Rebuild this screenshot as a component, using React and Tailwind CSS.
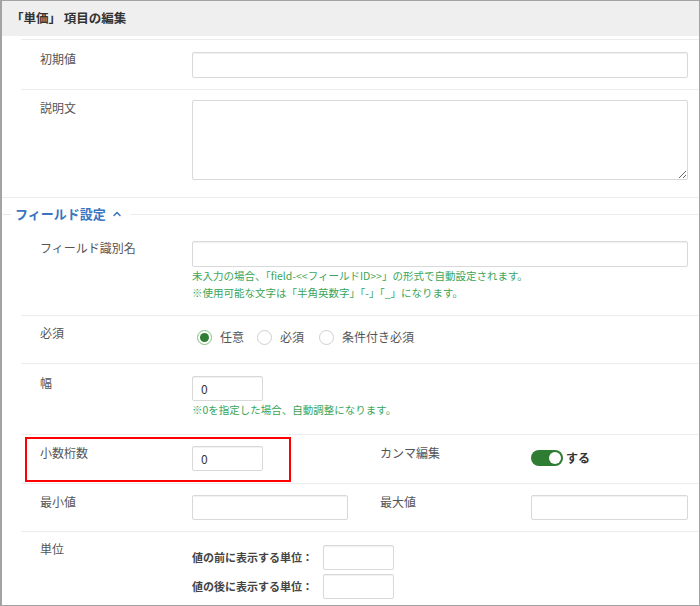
import React from 'react';
import { ChevronUp } from 'lucide-react';

const font = { fontFamily: '"Noto Sans CJK JP", "Noto Sans", sans-serif' };

function TextInput({ className = '', value = '' }) {
  return (
    <div className={`h-[25px] border border-[#d9d9d9] rounded-[2px] bg-white shadow-[inset_0_1px_1px_rgba(0,0,0,0.06)] flex items-center px-[8px] text-[12px] text-[#333] ${className}`}>
      {value}
    </div>
  );
}

function Label({ children, className = '' }) {
  return <div className={`text-[12px] leading-[14px] text-[#555] shrink-0 ${className}`}>{children}</div>;
}

function Hint({ children }) {
  return <div className="text-[10.5px] leading-[17px] text-[#3aa55a]">{children}</div>;
}

function Radio({ checked, label, className = '' }) {
  return (
    <div className={`flex items-center ${className}`}>
      {checked ? (
        <span className="w-[15px] h-[15px] rounded-full border border-[#7fbf7f] p-[2px] bg-white">
          <span className="block w-full h-full rounded-full bg-[#2e7d32]"></span>
        </span>
      ) : (
        <span className="w-[15px] h-[15px] rounded-full border border-[#cfcfcf] bg-white"></span>
      )}
      <span className="ml-[8px] text-[12px] text-[#555]">{label}</span>
    </div>
  );
}

export default function App() {
  return (
    <div className="w-[700px] h-[606px] border border-[#a3a3a3] border-l-2 bg-white overflow-hidden relative" style={font}>
      {/* header */}
      <div className="h-[35px] bg-[#efefef] flex items-center pl-[9px] text-[12.5px] font-bold text-[#333]">
        「単価」 項目の編集
      </div>

      <div className="ml-[19px] mt-[3px] border-t border-[#ececec]">
        {/* 初期値 */}
        <div className="h-[50px] flex pl-[19px] pt-[12px] border-b border-[#ececec]">
          <Label className="w-[152px]">初期値</Label>
          <TextInput className="w-[496px] h-[26px]" />
        </div>
        {/* 説明文 */}
        <div className="h-[107px] flex pl-[19px] pt-[10px]">
          <Label className="w-[152px] pt-[1px]">説明文</Label>
          <textarea className="w-[496px] h-[80px] border border-[#d9d9d9] rounded-[2px] outline-none"></textarea>
        </div>
      </div>

      {/* section header */}
      <div className="h-[33px] border-t border-[#ececec] flex items-center">
        <div className="w-[8px] ml-[1px] h-px bg-[#e6e6e6]"></div>
        <div className="ml-[4px] text-[13px] font-bold text-[#3b74bf]">フィールド設定</div>
        <ChevronUp size={12} strokeWidth={3} className="text-[#3b74bf] ml-[5px]" />
        <div className="flex-1 ml-[7px] h-px bg-[#ececec]"></div>
      </div>

      <div className="ml-[19px]">
        {/* フィールド識別名 */}
        <div className="h-[86px] flex pl-[19px] pt-[11px] border-b border-[#ececec]">
          <Label className="w-[152px]">フィールド識別名</Label>
          <div>
            <TextInput className="w-[496px] h-[26px]" />
            <Hint>未入力の場合、「field-&lt;&lt;フィールドID&gt;&gt;」の形式で自動設定されます。</Hint>
            <Hint>※使用可能な文字は「半角英数字」「-」「_」になります。</Hint>
          </div>
        </div>

        {/* 必須 */}
        <div className="h-[48px] flex pl-[19px] pt-[9px] border-b border-[#ececec]">
          <Label className="w-[152px] pt-[1px]">必須</Label>
          <div className="flex items-center h-[24px]">
            <Radio checked label="任意" className="ml-[5px]" />
            <Radio label="必須" className="ml-[13px]" />
            <Radio label="条件付き必須" className="ml-[15px]" />
          </div>
        </div>

        {/* 幅 */}
        <div className="h-[71px] flex pl-[19px] pt-[12px] border-b border-[#ececec]">
          <Label className="w-[152px]">幅</Label>
          <div>
            <TextInput className="w-[71px]" value="0" />
            <Hint>※0を指定した場合、自動調整になります。</Hint>
          </div>
        </div>

        {/* 小数桁数 / カンマ編集 */}
        <div className="h-[49px] flex pl-[19px] pt-[11px] border-b border-[#ececec]">
          <Label className="w-[152px]">小数桁数</Label>
          <TextInput className="w-[71px]" value="0" />
          <Label className="w-[151px] ml-[117px]">カンマ編集</Label>
          <div className="flex items-center mt-[4px] h-[16px]">
            <span className="w-[32px] h-[16px] rounded-full bg-[#2e7d32] flex items-center justify-end pr-[2px]">
              <span className="w-[12px] h-[12px] rounded-full bg-white"></span>
            </span>
            <span className="ml-[3px] text-[12px] font-bold text-[#333]">する</span>
          </div>
        </div>

        {/* 最小値 / 最大値 */}
        <div className="h-[48px] flex pl-[19px] pt-[11px] border-b border-[#ececec]">
          <Label className="w-[152px]">最小値</Label>
          <TextInput className="w-[156px]" />
          <Label className="w-[151px] ml-[32px]">最大値</Label>
          <TextInput className="w-[157px]" />
        </div>

        {/* 単位 */}
        <div className="flex pl-[19px] pt-[10px]">
          <Label className="w-[152px]">単位</Label>
          <div className="pt-[3px] flex flex-col gap-[4px]">
            <div className="flex items-center">
              <span className="w-[131px] whitespace-nowrap text-[11px] font-bold text-[#444]">値の前に表示する単位：</span>
              <TextInput className="w-[71px]" />
            </div>
            <div className="flex items-center">
              <span className="w-[131px] whitespace-nowrap text-[11px] font-bold text-[#444]">値の後に表示する単位：</span>
              <TextInput className="w-[71px]" />
            </div>
          </div>
        </div>
      </div>

      {/* annotation highlight */}
      <div className="absolute left-[23px] top-[436px] w-[266px] h-[45px] border-2 border-[#ff0000] pointer-events-none"></div>
    </div>
  );
}
